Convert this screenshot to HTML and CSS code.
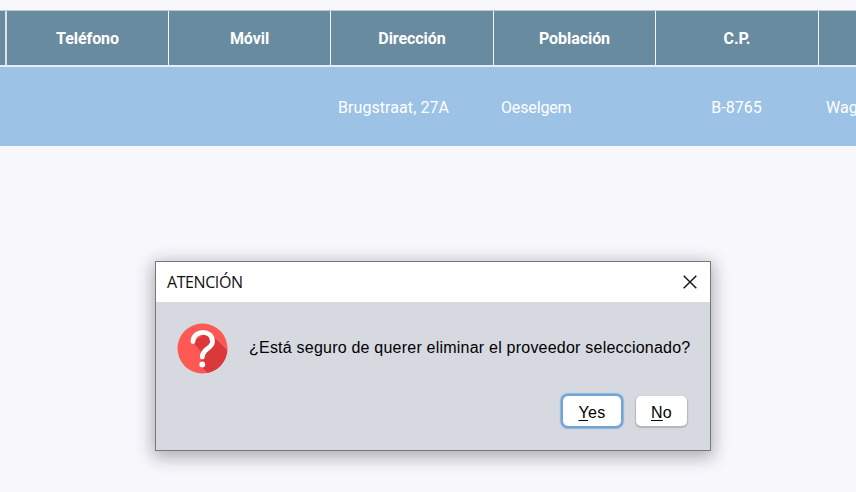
FILE: index.html
```
<!DOCTYPE html>
<html lang="es">
<head>
<meta charset="utf-8">
<title>Proveedores</title>
<link rel="stylesheet" href="styles.css">
</head>
<body>
<main class="app">
  <div class="table">
    <div class="row head">
      <div class="cell"></div>
      <div class="cell"><span>Teléfono</span></div>
      <div class="cell"><span>Móvil</span></div>
      <div class="cell"><span>Dirección</span></div>
      <div class="cell"><span>Población</span></div>
      <div class="cell"><span>C.P.</span></div>
      <div class="cell"></div>
    </div>
    <div class="row selected">
      <div class="cell"></div>
      <div class="cell"></div>
      <div class="cell"></div>
      <div class="cell"><span class="address">Brugstraat, 27A</span></div>
      <div class="cell"><span class="town">Oeselgem</span></div>
      <div class="cell center"><span>B-8765</span></div>
      <div class="cell"><span>Wag</span></div>
    </div>
  </div>
  <section class="dialog" role="dialog">
    <header class="titlebar">
      <span class="title">ATENCIÓN</span>
      <svg class="close" width="14" height="14" viewBox="0 0 14 14"><path d="M.7.7 13.3 13.3M13.3.7.7 13.3" stroke="#111" stroke-width="1.4" fill="none"/></svg>
    </header>
    <div class="message">
      <svg class="icon" width="51" height="51" viewBox="0 0 51 51">
        <defs><clipPath id="disc"><circle cx="25.500" cy="25.500" r="25"/></clipPath></defs>
        <circle cx="25.500" cy="25.500" r="25" fill="#ff5955"/>
        <path clip-path="url(#disc)" d="M16 19 26 12 35 12 56 33 56 56 38 56 23 43 25 30Z" fill="#db383c"/>
        <path d="M16 18.500C16.500 6.500 35.500 6 35.500 18.500C35.500 26 25.300 25 25.300 34" fill="none" stroke="#fff" stroke-width="4.800" stroke-linecap="round" stroke-linejoin="round"/>
        <circle cx="25.300" cy="41.500" r="2.900" fill="#fff"/>
      </svg>
      <p class="text">¿Está seguro de querer eliminar el proveedor seleccionado?</p>
    </div>
    <div class="actions">
      <button class="btn focused"><span><u>Y</u>es</span></button>
      <button class="btn"><span><u>N</u>o</span></button>
    </div>
  </section>
</main>
</body>
</html>
```
FILE: styles.css
```
* { box-sizing: border-box; }
body { margin: 0; background: #f8f7fc; }
.app {
  width: 856px;
  height: 492px;
  padding-top: 10px;
  overflow: hidden;
  font-family: Roboto, sans-serif;
}
.table { width: 856px; overflow: hidden; }
.row {
  display: grid;
  grid-template-columns: 7px 162px 162px 163px 162px 163px 37px;
  color: #fff;
  font-size: 16px;
}
.head {
  height: 57px;
  background: #698b9f;
  border-top: 1px solid #bccbd1;
  border-bottom: 2px solid #e4eef8;
  font-weight: 700;
  letter-spacing: -.06px;
}
.head .cell {
  display: flex;
  align-items: center;
  justify-content: center;
  border-right: 1px solid #f3f6f8;
}
.head .cell:first-child { border-right: 2px solid #dce4ea; }
.head .cell:last-child { border-right: 0; }
.selected { height: 79px; background: #9cc2e6; }
.selected .cell {
  display: flex;
  align-items: center;
  padding: 2px 0 0 7px;
  white-space: nowrap;
}
.selected .center { justify-content: center; padding: 2px 2px 0 0; }
.address { letter-spacing: .07px; }
.town { letter-spacing: -.15px; }
.dialog {
  width: 556px;
  height: 190px;
  margin: 115px 0 0 155px;
  background: #d6d9e0;
  border: 1px solid #77777b;
  box-shadow: 0 4px 16px 2px rgba(40, 35, 50, .36);
}
.titlebar {
  height: 40px;
  padding: 0 13px 1px 11px;
  display: flex;
  align-items: center;
  justify-content: space-between;
  background: #fff;
}
.title { font: 16px/20px "Open Sans", sans-serif; letter-spacing: -.42px; color: #111; }
.message {
  display: flex;
  align-items: flex-start;
  padding: 21px 0 0 21px;
}
.icon { flex: none; }
.text {
  margin: 15px 0 0 21px;
  font: 16px/20px "Liberation Sans", sans-serif;
  letter-spacing: .22px;
  color: #000;
  white-space: nowrap;
}
.actions {
  display: flex;
  justify-content: flex-end;
  gap: 15px;
  padding: 22px 23px 0 0;
}
.btn {
  width: 51px;
  height: 30px;
  padding: 3px 0 0;
  border: 0;
  border-radius: 5px;
  background: #fff;
  box-shadow: 0 1px 1px 1px #b4b6ba;
  font: 16px/20px "Liberation Sans", sans-serif;
  letter-spacing: .3px;
  color: #000;
}
.btn.focused {
  width: 58px;
  box-shadow: 0 0 0 2px #6fa5d6, 0 0 1px 3px #8db5da;
}
.btn u { text-underline-offset: 2px; text-decoration-thickness: 1px; }
```
